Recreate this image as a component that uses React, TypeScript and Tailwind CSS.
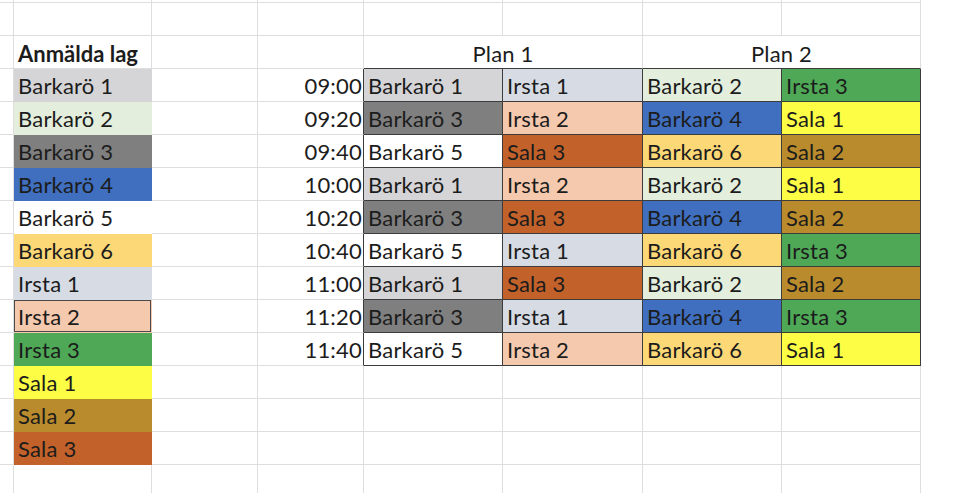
import React from 'react'

const fill: Record<string, string> = {
  'Barkarö 1': 'bg-[#d5d5d7]',
  'Barkarö 2': 'bg-[#e3efdc]',
  'Barkarö 3': 'bg-[#7f7f7f]',
  'Barkarö 4': 'bg-[#3f6fbe]',
  'Barkarö 5': 'bg-white',
  'Barkarö 6': 'bg-[#fcd877]',
  'Irsta 1': 'bg-[#d7dce4]',
  'Irsta 2': 'bg-[#f5c9ad]',
  'Irsta 3': 'bg-[#4ea856]',
  'Sala 1': 'bg-[#fdfd45]',
  'Sala 2': 'bg-[#ba8b2c]',
  'Sala 3': 'bg-[#c3612a]',
}

const teams = Object.keys(fill)

const schedule: [string, string, string, string, string][] = [
  ['09:00', 'Barkarö 1', 'Irsta 1', 'Barkarö 2', 'Irsta 3'],
  ['09:20', 'Barkarö 3', 'Irsta 2', 'Barkarö 4', 'Sala 1'],
  ['09:40', 'Barkarö 5', 'Sala 3', 'Barkarö 6', 'Sala 2'],
  ['10:00', 'Barkarö 1', 'Irsta 2', 'Barkarö 2', 'Sala 1'],
  ['10:20', 'Barkarö 3', 'Sala 3', 'Barkarö 4', 'Sala 2'],
  ['10:40', 'Barkarö 5', 'Irsta 1', 'Barkarö 6', 'Irsta 3'],
  ['11:00', 'Barkarö 1', 'Sala 3', 'Barkarö 2', 'Sala 2'],
  ['11:20', 'Barkarö 3', 'Irsta 1', 'Barkarö 4', 'Irsta 3'],
  ['11:40', 'Barkarö 5', 'Irsta 2', 'Barkarö 6', 'Sala 1'],
]

// plain sheet cell with light gridlines
function Cell({ children, className = '' }: { children?: React.ReactNode; className?: string }) {
  return (
    <div className={`flex items-center overflow-hidden whitespace-nowrap border-r border-b border-[#dedede] ${className}`}>
      {children}
    </div>
  )
}

// coloured cell, fill hides the gridline
function Team({ name, boxed, framed }: { name: string; boxed?: boolean; framed?: boolean }) {
  const border = boxed ? 'border-[#3c3c3c]' : 'border-transparent'
  const frame = framed ? 'shadow-[inset_0_0_0_1px_#4a4a4a]' : ''
  return (
    <div className={`flex items-center overflow-hidden whitespace-nowrap border-r border-b pl-[4px] pt-[1px] ${border} ${fill[name]} ${frame}`}>
      {name}
    </div>
  )
}

function EmptyRow() {
  return (
    <>
      {Array.from({ length: 8 }).map((_, i) => (
        <Cell key={i} />
      ))}
    </>
  )
}

export default function App() {
  return (
    <div
      className="w-[960px] h-[493px] overflow-hidden bg-white text-[22px] tracking-[0.2px] text-[#1c1c1c]"
      style={{ fontFamily: 'Lato, "Open Sans", sans-serif' }}
    >
      <div className="grid w-[921px] grid-cols-[14px_138px_106px_106px_139px_140px_139px_139px] grid-rows-[3px_repeat(15,33px)]">
        {/* sliver of the row above */}
        <EmptyRow />
        <EmptyRow />

        {/* headers */}
        <Cell />
        <Cell className="pl-[4px] pt-[3px] font-bold tracking-normal">Anmälda lag</Cell>
        <Cell />
        <Cell />
        <Cell className="col-span-2 justify-center pt-[3px] border-b-[#3c3c3c]">Plan 1</Cell>
        <Cell className="col-span-2 justify-center pt-[3px] border-b-[#3c3c3c]">Plan 2</Cell>

        {teams.map((team, i) => {
          const row = schedule[i]
          return (
            <React.Fragment key={team}>
              <Cell />
              <Team name={team} framed={team === 'Irsta 2'} />
              <Cell />
              {row ? (
                <>
                  <Cell className="justify-end pr-[1px] pt-[1px] border-r-[#3c3c3c]">{row[0]}</Cell>
                  <Team name={row[1]} boxed />
                  <Team name={row[2]} boxed />
                  <Team name={row[3]} boxed />
                  <Team name={row[4]} boxed />
                </>
              ) : (
                <>
                  <Cell />
                  <Cell />
                  <Cell />
                  <Cell />
                  <Cell />
                </>
              )}
            </React.Fragment>
          )
        })}

        <EmptyRow />
      </div>
    </div>
  )
}
